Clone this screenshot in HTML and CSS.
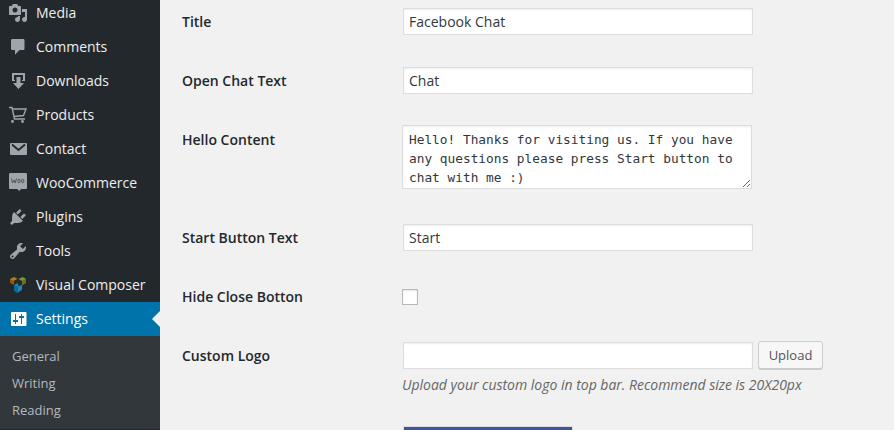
FILE: index.html
```html
<!DOCTYPE html>
<html lang="en">
<head>
<meta charset="utf-8">
<title>Facebook Chat Settings</title>
<link rel="stylesheet" href="styles.css">
</head>
<body>
<nav class="menu">
  <a class="item first"><svg class="icon" viewBox="0 0 20 20"><path d="M13 11V4c0-.55-.45-1-1-1h-1.670L9 1H5L3.670 3H2c-.55 0-1 .45-1 1v7c0 .55.45 1 1 1h10c.55 0 1-.45 1-1zM7 4.500c1.380 0 2.500 1.120 2.500 2.500S8.380 9.500 7 9.500 4.500 8.380 4.500 7 5.620 4.500 7 4.500zM14 6h5v10.500c0 1.380-1.120 2.500-2.500 2.500S14 17.880 14 16.500s1.120-2.500 2.500-2.500c.17 0 .34.02.5.05V9h-3V6zm-4 8.050V13h2v3.500c0 1.380-1.120 2.500-2.500 2.500S7 17.880 7 16.500 8.120 14 9.500 14c.17 0 .34.02.5.05z"/></svg><span>Media</span></a>
  <a class="item"><svg class="icon" viewBox="0 0 20 20"><path d="M4.500 2h10.500c1 0 1.500.5 1.500 1.500v8c0 1-.5 1.500-1.500 1.500h-3.500L7 17.800V13H4.500c-1 0-1.500-.5-1.500-1.500v-8C3 2.500 3.500 2 4.500 2z"/></svg><span>Comments</span></a>
  <a class="item"><svg class="icon" viewBox="0 0 20 20"><path d="M4 2h13v8h-3V9h1V4H6v5h1v1H4zM8.500 6h4v6H16l-5.500 6L5 12h3.500z"/></svg><span>Downloads</span></a>
  <a class="item"><svg class="icon line" viewBox="0 0 20 20"><path d="M1 2.500h3l2.500 11.500h10.500M4.500 4H18l-2.500 6.500-9.500 1"/><circle class="solid" cx="4.500" cy="16.500" r="1.400"/><circle class="solid" cx="14.500" cy="16.500" r="1.400"/></svg><span>Products</span></a>
  <a class="item"><svg class="icon" viewBox="0 0 20 20"><rect x="2" y="4" width="17" height="12" rx="1"/><path class="cut" d="M4 5.500l6.500 5.500L17 5.500"/></svg><span>Contact</span></a>
  <a class="item"><svg class="icon" viewBox="0 0 20 20"><path d="M2.500 0h15c1 0 1.500.5 1.500 1.500v13c0 1-.5 1.500-1.500 1.500H13l-1.500 2L9 16H2.500C1.500 16 1 15.500 1 14.500v-13C1 .5 1.500 0 2.500 0z"/><path class="thin" d="M3.500 5.500l1 4.500 1.700-3 1 3 1.300-4.500"/><ellipse class="thin" cx="11" cy="8" rx="1.200" ry="1.800"/><ellipse class="thin" cx="14.700" cy="8" rx="1.200" ry="1.800"/></svg><span>WooCommerce</span></a>
  <a class="item"><svg class="icon" viewBox="0 0 20 20"><path d="M13.110 4.360L9.870 7.600 8 5.730l3.240-3.240c.35-.34 1.050-.2 1.560.32.52.51.66 1.210.31 1.550zm-8 1.770l.91-1.120 9.010 9.010-1.190.84c-.71.71-2.630 1.160-3.820 1.160H6.140L4.900 17.260c-.59.59-1.540.59-2.120 0-.59-.58-.59-1.530 0-2.120l1.240-1.240v-3.880c0-1.130.4-3.190 1.090-3.890zm7.260 3.970l3.240-3.240c.34-.35 1.040-.21 1.550.31.52.51.66 1.210.31 1.550l-3.240 3.250z"/></svg><span>Plugins</span></a>
  <a class="item"><svg class="icon" viewBox="0 0 20 20"><path d="M16.680 9.770c-1.340 1.340-3.300 1.670-4.950.99l-5.410 6.520c-.99.99-2.590.99-3.580 0s-.99-2.590 0-3.570l6.520-5.420c-.68-1.650-.35-3.610.99-4.950 1.280-1.280 3.120-1.620 4.720-1.060l-2.890 2.890 2.820 2.820 2.860-2.870c.53 1.580.18 3.390-1.080 4.650zM3.810 16.210c.4.39 1.040.39 1.430 0 .4-.4.4-1.040 0-1.430-.39-.4-1.030-.4-1.430 0-.39.39-.39 1.030 0 1.430z"/></svg><span>Tools</span></a>
  <a class="item"><svg class="icon" viewBox="0 0 20 20"><path fill="#b97a1a" d="M2 4l4-2 3.500 1.700L6 5.700v3.800L2 7.800z"/><path fill="#8a5a14" d="M2 4l4 1.700v3.800L2 7.800z"/><path fill="#7b9633" d="M10.500 4l4-2L18 3.700v4l-4 2.500V6z"/><path fill="#5b7628" d="M14 5.700l4-2v4l-4 2.500z"/><path fill="#1d87b3" d="M6 10l4-2 .5 3.500L14 9.500v5.200L9.500 18 6 15.500z"/><path fill="#126a91" d="M6 10l4 2v5.700L6 15.500z"/></svg><span>Visual Composer</span></a>
  <a class="item current"><svg class="icon" viewBox="0 0 20 20"><path fill-rule="evenodd" d="M4 3h13.500q1 0 1 1v12q0 1-1 1H4q-1 0-1-1V4q0-1 1-1zM7 5v6H5v2h2v2h1v-2h2v-2H8V5zM13 5v2h-2v2h2v6h1V9h2V7h-2V5z"/></svg><span>Settings</span></a>
  <div class="submenu">
    <a>General</a>
    <a>Writing</a>
    <a>Reading</a>
  </div>
</nav>
<main class="form">
  <div class="row"><label>Title</label><input class="text" type="text" value="Facebook Chat"></div>
  <div class="row"><label>Open Chat Text</label><input class="text" type="text" value="Chat"></div>
  <div class="row tall"><label>Hello Content</label><textarea spellcheck="false">Hello! Thanks for visiting us. If you have any questions please press Start button to chat with me :)</textarea></div>
  <div class="row"><label>Start Button Text</label><input class="text" type="text" value="Start"></div>
  <div class="row"><label>Hide Close Botton</label><input class="check" type="checkbox"></div>
  <div class="row logo"><label>Custom Logo</label>
    <div>
      <div class="upload"><input class="text" type="text"><button>Upload</button></div>
      <p class="hint">Upload your custom logo in top bar. Recommend size is 20X20px</p>
    </div>
  </div>
  <div class="swatch"></div>
</main>
</body>
</html>
```
FILE: styles.css
```css
* { box-sizing: border-box; }
body {
  margin: 0;
  height: 430px;
  display: flex;
  background: #f1f1f1;
  color: #32373c;
  font: 14px/18px "Open Sans", sans-serif;
}
.menu {
  width: 160px;
  height: 430px;
  flex: none;
  overflow: hidden;
  background: #23282d;
}
.item {
  position: relative;
  display: flex;
  align-items: center;
  gap: 8px;
  height: 34px;
  padding-left: 8px;
  color: #eee;
  white-space: nowrap;
}
.first { margin-top: -4px; }
.icon { width: 20px; height: 20px; flex: none; fill: #a0a5aa; }
.line { fill: none; stroke: #a0a5aa; stroke-width: 1.4; }
.solid { fill: #a0a5aa; stroke: none; }
.cut { fill: none; stroke: #23282d; stroke-width: 1.8; }
.thin { fill: none; stroke: #4b5056; stroke-width: .9; }
.current { background: #0073aa; color: #fff; }
.current .icon { fill: #fff; }
.current::after {
  content: "";
  position: absolute;
  right: 0;
  top: 9px;
  border: solid transparent;
  border-width: 8px 8px 8px 0;
  border-right-color: #f1f1f1;
}
.submenu {
  height: 93px;
  padding: 7px 12px 0;
  background: #32373c;
  color: #b4b9be;
  font-size: 13px;
}
.submenu a { display: block; height: 27px; line-height: 27px; }
.form { flex: 1; padding: 8px 0 0 22px; }
.row { display: flex; height: 59px; }
.row label {
  width: 220px;
  flex: none;
  padding-top: 5px;
  color: #23282d;
  font-weight: 600;
}
.tall { height: 98px; }
.logo { height: 84px; }
.text, textarea {
  margin: 0;
  border: 1px solid #ddd;
  border-radius: 0;
  background: #fff;
  box-shadow: inset 0 1px 2px rgba(0, 0, 0, .07);
  color: #32373c;
  outline: 0;
}
.text {
  width: 350px;
  height: 27px;
  margin-left: 1px;
  padding: 3px 5px;
  font: 14px/19px "Open Sans", sans-serif;
}
textarea {
  width: 350px;
  height: 64px;
  margin-top: -1px;
  padding: 4px 6px;
  overflow: hidden;
  font: 12.8px/19px "DejaVu Sans Mono", monospace;
}
.check {
  appearance: none;
  width: 16px;
  height: 16px;
  margin: 6px 0 0;
  border: 1px solid #b4b9be;
  background: #fff;
  box-shadow: inset 0 1px 2px rgba(0, 0, 0, .1);
}
.upload { display: flex; gap: 5px; }
button {
  width: 65px;
  height: 28px;
  margin-top: -1px;
  padding: 0;
  border: 1px solid #ccc;
  border-radius: 3px;
  background: #f7f7f7;
  box-shadow: 0 1px 0 #ccc;
  color: #555;
  font: 13px/26px "Open Sans", sans-serif;
}
.hint {
  margin: 7px 0 0;
  color: #666;
  font-style: italic;
  letter-spacing: -.01px;
  white-space: nowrap;
}
.swatch {
  width: 170px;
  height: 4px;
  margin-left: 221px;
  border: 1px solid #ddd;
  border-bottom: 0;
  background: #3b5998;
}
```
